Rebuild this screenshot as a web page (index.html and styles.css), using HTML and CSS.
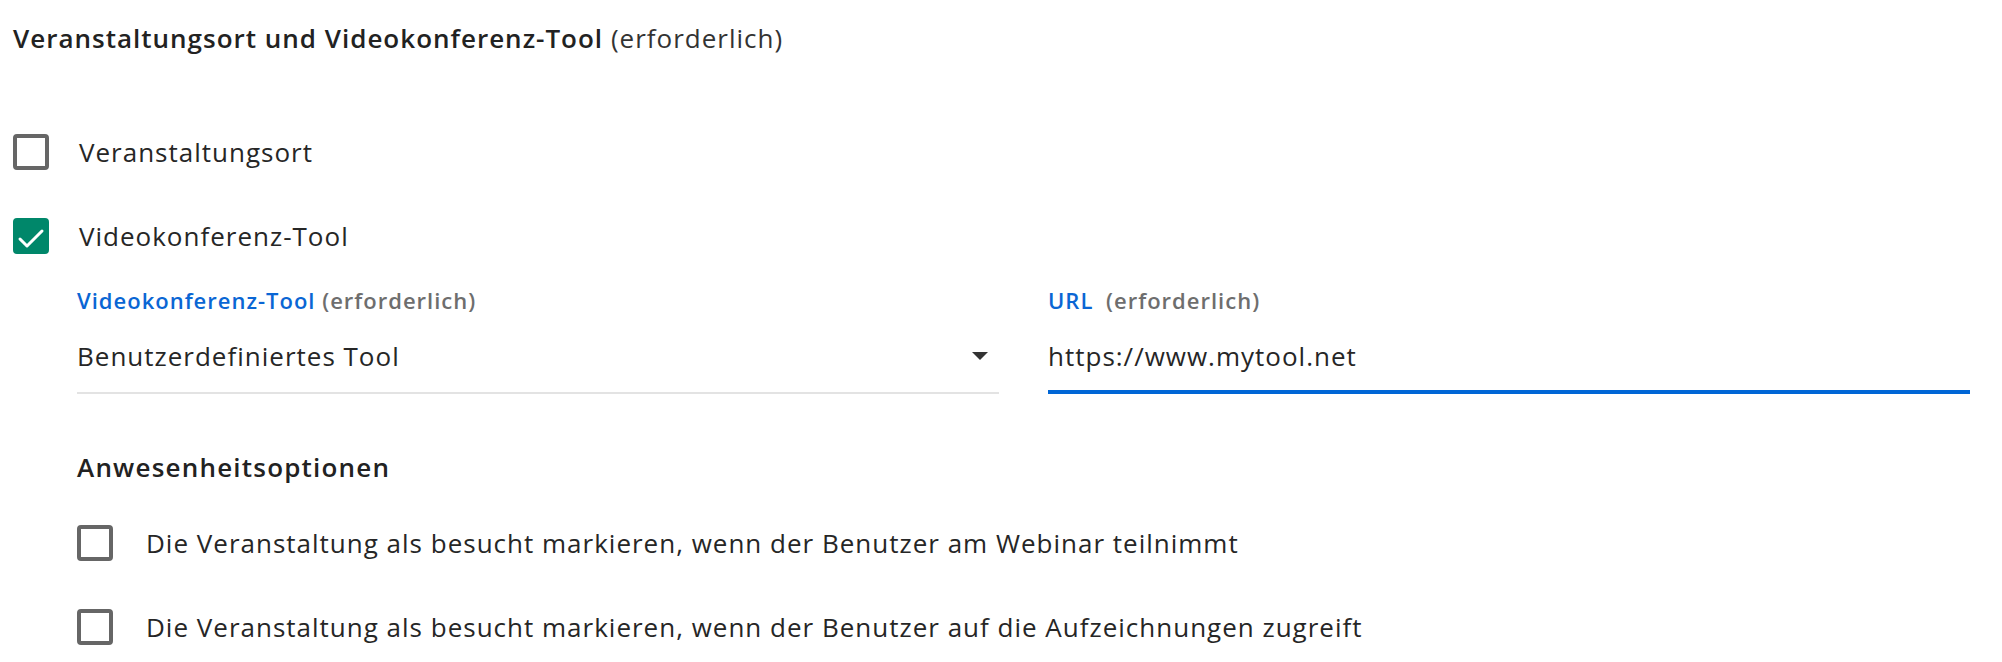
FILE: index.html
```html
<!DOCTYPE html>
<html lang="de">
<head>
<meta charset="utf-8">
<title>Veranstaltungsort</title>
<link rel="stylesheet" href="styles.css">
</head>
<body>
<div class="page">
  <h2 class="title"><span class="title-strong">Veranstaltungsort und Videokonferenz-Tool</span> <span class="title-req">(erforderlich)</span></h2>

  <label class="check-row first">
    <span class="box"></span>
    <span class="check-text">Veranstaltungsort</span>
  </label>

  <label class="check-row second">
    <span class="box checked">
      <svg viewBox="0 0 36 36" width="36" height="36"><polyline points="7,21 14,28 29,13" fill="none" stroke="#fff" stroke-width="3" stroke-linecap="round" stroke-linejoin="round"/></svg>
    </span>
    <span class="check-text">Videokonferenz-Tool</span>
  </label>

  <div class="nested">
    <div class="fields">
      <div class="field">
        <div class="field-label"><span class="label-main">Videokonferenz-Tool</span> <span class="label-req">(erforderlich)</span></div>
        <div class="select">
          <span class="field-value">Benutzerdefiniertes Tool</span>
          <span class="arrow"></span>
        </div>
      </div>
      <div class="field">
        <div class="field-label"><span class="label-main url">URL</span> <span class="label-req">(erforderlich)</span></div>
        <div class="input">
          <span class="field-value">https://www.mytool.net</span>
        </div>
      </div>
    </div>

    <h3 class="subheading">Anwesenheitsoptionen</h3>

    <label class="check-row opt first-opt">
      <span class="box"></span>
      <span class="check-text">Die Veranstaltung als besucht markieren, wenn der Benutzer am Webinar teilnimmt</span>
    </label>
    <label class="check-row opt">
      <span class="box"></span>
      <span class="check-text">Die Veranstaltung als besucht markieren, wenn der Benutzer auf die Aufzeichnungen zugreift</span>
    </label>
  </div>
</div>
</body>
</html>
```

FILE: styles.css
```css
* { box-sizing: border-box; }

html, body {
  margin: 0;
  padding: 0;
  background: #ffffff;
}

body {
  font-family: "Open Sans", "Noto Sans", sans-serif;
  color: #262626;
  letter-spacing: 1px;
}

.page {
  padding: 21px 32px 0 13px;
}

.title {
  margin: 0;
  font-size: 26px;
  line-height: 34px;
  font-weight: 400;
  color: #222;
}

.title-strong {
  font-weight: 600;
}

.title-req {
  font-weight: 400;
  color: #333;
}

.check-row {
  display: flex;
  align-items: center;
  height: 36px;
  gap: 30px;
}

.check-row.first {
  margin-top: 79px;
}

.check-row.second {
  margin-top: 48px;
}

.box {
  flex: none;
  width: 36px;
  height: 36px;
  border: 4px solid #666666;
  border-radius: 4px;
  background: #fff;
  position: relative;
}

.box.checked {
  border-color: #00876a;
  background: #00876a;
}

.box.checked svg {
  position: absolute;
  left: -4px;
  top: -4px;
}

.check-text {
  font-size: 26px;
  line-height: 36px;
  color: #262626;
}

.nested {
  padding-left: 64px;
}

.fields {
  display: flex;
  gap: 49px;
  margin-top: 31px;
}

.field {
  flex: 1 1 0;
  min-width: 0;
}

.field-label {
  font-size: 22px;
  line-height: 30px;
  font-weight: 600;
}

.label-main {
  color: #0a66d4;
}

.label-main.url {
  margin-right: 6px;
}

.label-req {
  color: #6e6e6e;
}

.select,
.input {
  display: flex;
  align-items: center;
  justify-content: space-between;
  margin-top: 23px;
}

.select {
  padding-bottom: 18px;
  border-bottom: 2px solid #e3e3e3;
}

.input {
  padding-bottom: 16px;
  border-bottom: 4px solid #0066d6;
}

.field-value {
  font-size: 26px;
  line-height: 36px;
  color: #262626;
}

.arrow {
  width: 0;
  height: 0;
  border-left: 8px solid transparent;
  border-right: 8px solid transparent;
  border-top: 8px solid #333;
  margin-right: 11px;
}

.subheading {
  margin: 56px 0 0 0;
  font-size: 26px;
  line-height: 34px;
  font-weight: 600;
  color: #222;
  letter-spacing: 1.2px;
}

.check-row.opt {
  gap: 33px;
}

.check-row.first-opt {
  margin-top: 41px;
}

.check-row.opt + .check-row.opt {
  margin-top: 48px;
}
```
